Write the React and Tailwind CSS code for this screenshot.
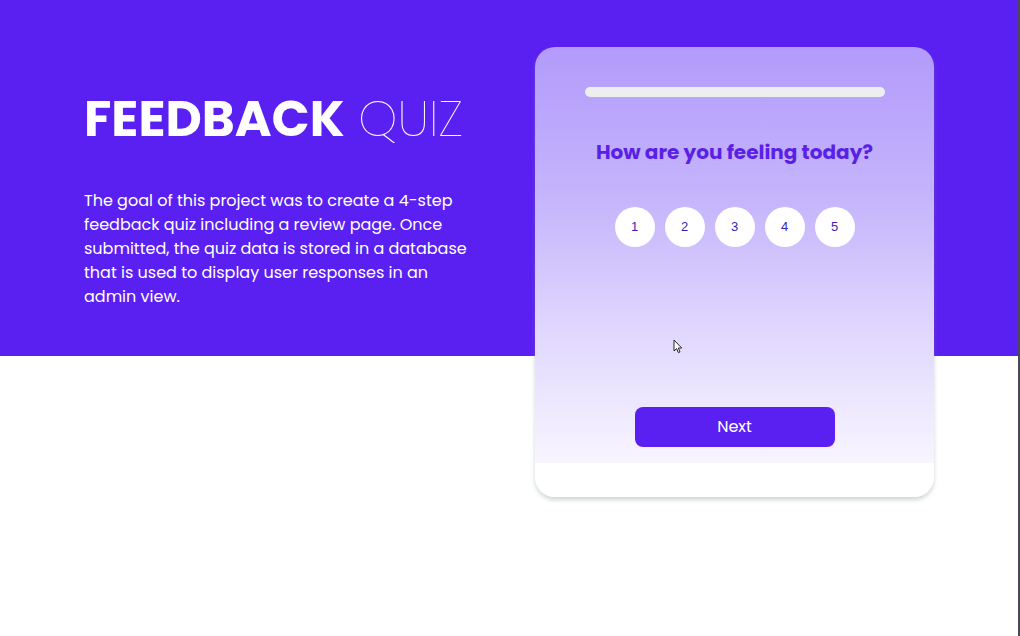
import { useState } from 'react'

const OPCOES = [1, 2, 3, 4, 5]

export default function App() {
  const [nota, setNota] = useState(null)

  return (
    <div className="min-h-[636px] w-full bg-[linear-gradient(to_bottom,#5a20f2_356px,#ffffff_356px)] border-r-2 border-[#4a4a52] font-['Poppins','Inter','Liberation_Sans',sans-serif]">
      <div className="flex pl-[84px] pt-[47px]">

        {/* Intro */}
        <div className="w-[400px] pt-[47px]">
          <h1 className="text-[50px] leading-none text-white whitespace-nowrap">
            <span className="font-bold">FEEDBACK</span>{' '}
            <span className="font-extralight">QUIZ</span>
          </h1>
          <p className="mt-[45px] text-white text-[16px] leading-[24px]">
            The goal of this project was to create a 4-step<br />
            feedback quiz including a review page. Once<br />
            submitted, the quiz data is stored in a database<br />
            that is used to display user responses in an<br />
            admin view.
          </p>
        </div>

        {/* Card */}
        <div className="relative ml-[51px] w-[399px] h-[450px] rounded-[20px] overflow-hidden shadow-[0_3px_4px_rgba(120,140,140,0.35)] bg-[linear-gradient(to_bottom,#b29bfb_0%,#c6b6fc_35%,#e2d9fe_65%,#f8f5fe_92.5%,#ffffff_92.5%)] flex flex-col items-center">
          <div className="mt-[40px] w-[300px] h-[10px] rounded-full bg-[#eeeeee]" />
          <h2 className="mt-[40px] text-[20px] font-bold text-[#5a20e6]">
            How are you feeling today?
          </h2>
          <div className="mt-[40px] flex gap-[10px]">
            {OPCOES.map(n => (
              <button
                key={n}
                onClick={() => setNota(n)}
                className={`w-[40px] h-[40px] rounded-full flex items-center justify-center text-[13px] font-['Liberation_Sans',sans-serif] ${nota === n ? 'bg-[#5a20f2] text-white' : 'bg-white text-[#3a1db5]'}`}
              >
                {n}
              </button>
            ))}
          </div>
          <button className="mt-[160px] w-[200px] h-[40px] rounded-[8px] bg-[#5a20f2] text-white text-[16px] font-normal">
            Next
          </button>

          {/* cursor */}
          <svg className="absolute left-[138px] top-[292px]" width="10" height="15" viewBox="0 0 10 15">
            <path d="M1 1 L1 12 L3.6 9.6 L5.4 13.6 L7 12.9 L5.3 9 L8.7 9 Z" fill="#fff" stroke="#222" strokeWidth="1" strokeLinejoin="round" />
          </svg>
        </div>
      </div>
    </div>
  )
}
